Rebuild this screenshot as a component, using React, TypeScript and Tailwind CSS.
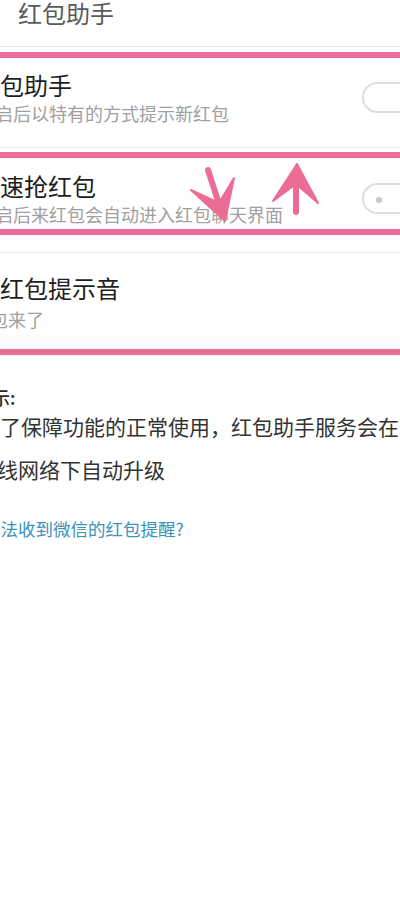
import React from "react";

const PINK = "#ec6d93";

function Toggle({ dot }: { dot?: boolean }) {
  return (
    <div className="relative mr-[-22px] h-[31px] w-[60px] shrink-0 rounded-full border-2 border-[#dedede] bg-white">
      {dot && <div className="absolute left-[12px] top-[12px] h-[6px] w-[6px] rounded-full bg-[#c8c8c8]" />}
    </div>
  );
}

export default function App() {
  return (
    <div
      className="relative h-[900px] w-[400px] overflow-hidden bg-white"
      style={{ fontFamily: '"Noto Sans CJK SC", "Noto Sans", sans-serif' }}
    >
      {/* header */}
      <div className="h-[47px] border-b border-[#ececec] pl-[18px]">
        <div className="whitespace-nowrap text-[24px] leading-[25px] text-[#5a5a5a]">红包助手</div>
      </div>

      {/* row 1 */}
      <div className="flex h-[101px] items-start justify-between border-b border-[#eeeeee]">
        <div className="-ml-6 pt-[23px] whitespace-nowrap">
          <div className="text-[24px] leading-[30px] text-[#1e1e1e]">红包助手</div>
          <div className="mt-[1px] ml-[1px] text-[18px] leading-[24px] text-[#a0a0a0]">开启后以特有的方式提示新红包</div>
        </div>
        <div className="mt-[35px]">
          <Toggle />
        </div>
      </div>

      {/* row 2 */}
      <div className="flex h-[105px] items-start justify-between border-b border-[#eeeeee]">
        <div className="-ml-6 pt-[23px] whitespace-nowrap">
          <div className="text-[24px] leading-[30px] text-[#1e1e1e]">快速抢红包</div>
          <div className="mt-[1px] ml-[1px] text-[18px] leading-[24px] text-[#a0a0a0]">开启后来红包会自动进入红包聊天界面</div>
        </div>
        <div className="mt-[35px]">
          <Toggle dot />
        </div>
      </div>

      {/* row 3 */}
      <div className="h-[103px] bg-gradient-to-b from-white from-70% to-[#f6f8fa]">
        <div className="-ml-6 pt-[20px] whitespace-nowrap">
          <div className="text-[24px] leading-[30px] text-[#1e1e1e]">新红包提示音</div>
          <div className="mt-[4px] ml-[-4px] text-[18px] leading-[24px] text-[#a0a0a0]">红包来了</div>
        </div>
      </div>

      {/* tips */}
      <div className="whitespace-nowrap pt-[31px]">
        <div className="ml-[-26px] text-[18px] font-medium leading-[20px] text-[#2a2a2a]">提示:</div>
        <div className="mt-[-2px] ml-[-21px] text-[21px] leading-[43px] text-[#333333]">
          <div>为了保障功能的正常使用，红包助手服务会在</div>
          <div className="ml-[-3px]">无线网络下自动升级</div>
        </div>
        <div className="mt-[26px] ml-[-17px] text-[17.5px] leading-[24px] text-[#3b92bb]">无法收到微信的红包提醒?</div>
      </div>

      {/* annotation overlay: pink lines */}
      <div className="pointer-events-none absolute left-0 top-[52px] h-[6px] w-full" style={{ background: PINK }} />
      <div className="pointer-events-none absolute left-0 top-[152px] h-[6px] w-full" style={{ background: PINK }} />
      <div className="pointer-events-none absolute left-0 top-[229px] h-[6px] w-full" style={{ background: PINK }} />
      <div className="pointer-events-none absolute left-0 top-[349px] h-[6px] w-full" style={{ background: PINK }} />

      {/* annotation arrows */}
      <svg className="pointer-events-none absolute left-0 top-0" width="400" height="900" viewBox="0 0 400 900">
        {/* down arrow */}
        <line x1="208" y1="170" x2="220" y2="207" stroke={PINK} strokeWidth="6" strokeLinecap="round" />
        <path d="M225 221 L191 190 L219 203 L234 178 Z" fill={PINK} stroke={PINK} strokeWidth="2" strokeLinejoin="round" />
        {/* up arrow */}
        <line x1="296" y1="212" x2="296" y2="178" stroke={PINK} strokeWidth="6" strokeLinecap="round" />
        <path d="M297 164 L273 201 L296 184 L318 203 Z" fill={PINK} stroke={PINK} strokeWidth="2" strokeLinejoin="round" />
      </svg>
    </div>
  );
}
